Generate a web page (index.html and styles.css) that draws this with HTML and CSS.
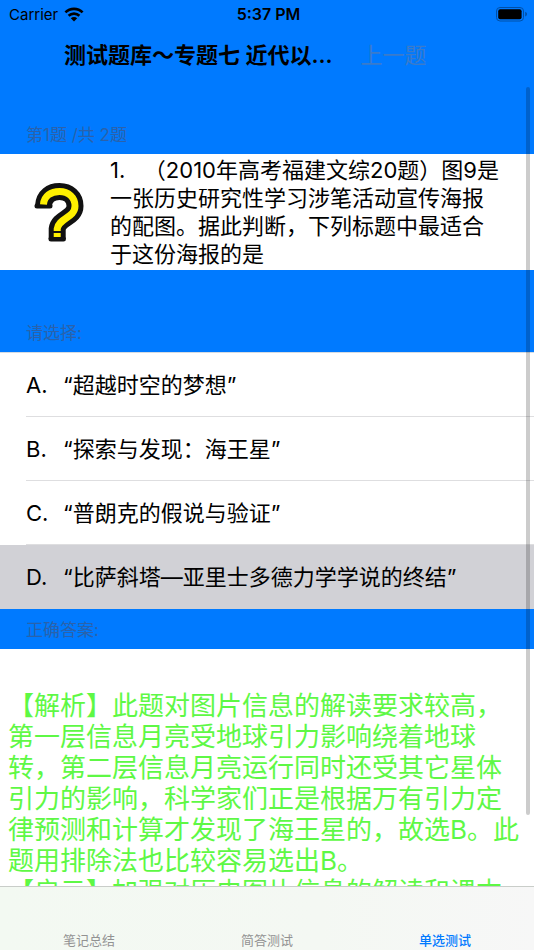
FILE: index.html
```html
<!DOCTYPE html>
<html lang="zh-CN">
<head>
  <meta charset="UTF-8" />
  <meta name="viewport" content="width=device-width, initial-scale=1" />
  <title>单选测试</title>
  <link rel="stylesheet" href="styles.css">
</head>
<body>
  <header class="top">
    <div class="status-bar">
      <div class="carrier">
        <span>Carrier</span>
        <svg class="wifi" viewBox="0 0 20 15" aria-hidden="true">
          <path d="M1.4 5.4 A12.2 12.2 0 0 1 18.6 5.4" />
          <path d="M4.6 8.8 A7.7 7.7 0 0 1 15.4 8.8" />
          <path class="wifi-dot" d="M10 14.4 L6.8 11.2 A4.6 4.6 0 0 1 13.2 11.2 Z" />
        </svg>
      </div>
      <div class="clock">5:37 PM</div>
      <svg class="battery" viewBox="0 0 32 15" aria-hidden="true">
        <rect class="battery-shell" x="0.5" y="0.5" width="27" height="13.5" rx="3.5" />
        <rect x="2.2" y="2.2" width="23.4" height="10" rx="2" />
        <path class="battery-tip" d="M29.2 4.8 C31.6 5.6 31.6 8.6 29.2 9.4 Z" />
      </svg>
    </div>
    <nav class="nav-bar">
      <h1 class="nav-title">测试题库～专题七 近代以...</h1>
      <button class="prev-btn" type="button" disabled>上一题</button>
    </nav>
  </header>

  <main class="content">
    <h2 class="section-head first">第1题 /共 2题</h2>
    <section class="question">
      <svg class="question-icon" viewBox="0 0 50 60" role="img" aria-label="问题">
        <path class="mark-outline" d="M8.5 24 C9 14 16 9.5 24.5 9.5 C33.5 9.5 40 15.5 40 24 C40 36 23.5 36 22.2 47 V57" />
        <path class="mark-outline-end" d="M2 24 H15 M16 57 H28.4" />
        <path class="mark-fill" d="M8.5 22.5 C9 14 16 9.5 24.5 9.5 C33.5 9.5 40 15.5 40 24 C40 36 23.5 36 22.2 47 V49" />
        <path class="mark-fill" d="M22.2 51 V55" />
      </svg>
      <p class="question-text">1.&nbsp;&nbsp;&nbsp;（2010年高考福建文综20题）图9是一张历史研究性学习涉笔活动宣传海报的配图。据此判断，下列标题中最适合于这份海报的是</p>
    </section>

    <h2 class="section-head" id="choose">请选择:</h2>
    <div class="options" role="radiogroup" aria-labelledby="choose">
      <label class="option">
        <input type="radio" name="answer" value="A">
        <span class="option-text"><span class="letter">A.</span>“超越时空的梦想”</span>
      </label>
      <label class="option">
        <input type="radio" name="answer" value="B">
        <span class="option-text"><span class="letter">B.</span>“探索与发现：海王星”</span>
      </label>
      <label class="option">
        <input type="radio" name="answer" value="C">
        <span class="option-text"><span class="letter">C.</span>“普朗克的假说与验证”</span>
      </label>
      <label class="option">
        <input type="radio" name="answer" value="D" checked>
        <span class="option-text"><span class="letter">D.</span>“比萨斜塔—亚里士多德力学学说的终结”</span>
      </label>
    </div>

    <h2 class="section-head short">正确答案:</h2>
    <section class="analysis">
      <p>【解析】此题对图片信息的解读要求较高，第一层信息月亮受地球引力影响绕着地球转，第二层信息月亮运行同时还受其它星体引力的影响，科学家们正是根据万有引力定律预测和计算才发现了海王星的，故选B。此题用排除法也比较容易选出B。</p>
      <p>【启示】加强对历史图片信息的解读和课本</p>
    </section>
  </main>

  <div class="scroll-thumb"></div>

  <nav class="tab-bar">
    <a class="tab" href="#notes">笔记总结</a>
    <a class="tab" href="#short">简答测试</a>
    <a class="tab active" href="#single">单选测试</a>
  </nav>
</body>
</html>
```

FILE: styles.css
```css
* {
  box-sizing: border-box;
}
body {
  margin: 0;
  height: 100vh;
  display: flex;
  flex-direction: column;
  position: relative;
  overflow: hidden;
  background: #fff;
  color: #000;
  font-family: Inter, 'Noto Sans CJK SC', sans-serif;
  font-size: 22px;
  text-spacing-trim: space-all;
}
h1, h2, p {
  margin: 0;
}

/* status bar + navigation */
.top {
  flex: none;
  background: #007aff;
}
.status-bar {
  display: grid;
  grid-template-columns: 1fr auto 1fr;
  align-items: center;
  height: 28px;
  padding: 0 6px 0 9px;
  font-size: 15px;
}
.carrier {
  display: flex;
  align-items: center;
  gap: 6px;
}
.wifi {
  width: 20px;
  height: 15px;
  fill: none;
  stroke: #000;
  stroke-width: 2.6;
}
.wifi .wifi-dot {
  fill: #000;
  stroke: none;
}
.clock {
  font-size: 16px;
  font-weight: 600;
}
.battery {
  justify-self: end;
  width: 32px;
  height: 15px;
}
.battery-shell {
  fill: none;
  stroke: #0050a8;
}
.battery-tip {
  fill: #0050a8;
}
.nav-bar {
  display: flex;
  align-items: center;
  gap: 28px;
  height: 54px;
  padding: 0 64px;
}
.nav-title {
  font-size: 22px;
  font-weight: 600;
  line-height: 32px;
  white-space: nowrap;
}
.prev-btn {
  padding: 0;
  border: none;
  background: none;
  font: inherit;
  line-height: 32px;
  white-space: nowrap;
  color: #3a7bcb;
}

/* table */
.content {
  flex: 1;
  min-height: 0;
  overflow: hidden;
}
.section-head {
  display: flex;
  align-items: flex-end;
  height: 82px;
  padding: 0 26px 7px;
  background: #007aff;
  color: #2a62ab;
  font-size: 17px;
  font-weight: 400;
  line-height: 24px;
}
.section-head.first {
  height: 72px;
}
.section-head.short {
  height: 40px;
}
.question {
  display: flex;
  align-items: center;
  gap: 25px;
  padding: 2px 32px 2px 35px;
}
.question-icon {
  flex: none;
  width: 50px;
  height: 60px;
  fill: none;
  overflow: visible;
}
.mark-outline {
  stroke: #111;
  stroke-width: 17;
}
.mark-outline-end {
  stroke: #111;
  stroke-width: 5;
  stroke-linecap: round;
}
.mark-fill {
  stroke: #fff000;
  stroke-width: 7;
}
.question-text {
  line-height: 28px;
}
.options {
  border-top: 1px solid #d5dbe2;
}
.option {
  display: block;
  padding-left: 26px;
  cursor: pointer;
}
.option input {
  position: absolute;
  opacity: 0;
}
.option-text {
  display: flex;
  align-items: baseline;
  height: 64px;
  border-bottom: 1px solid #dedee0;
  line-height: 64px;
}
.letter {
  width: 37px;
}
.option:has(input:checked) {
  background: #d1d1d6;
}
.option:last-child .option-text {
  border-bottom-color: transparent;
}
.analysis {
  padding: 41px 8px 0;
  color: #5ef845;
  font-size: 26px;
  line-height: 31px;
}
.scroll-thumb {
  position: absolute;
  top: 87px;
  right: 4px;
  bottom: 135px;
  width: 4px;
  border-radius: 2px;
  background: rgba(0, 0, 0, 0.2);
}

/* bottom tabs */
.tab-bar {
  flex: none;
  display: flex;
  height: 64px;
  border-top: 1px solid #c9cdc9;
  background: linear-gradient(90deg, #f3f9f2 0%, #f4f8f3 60%, #f7f7f7 100%);
}
.tab {
  flex: 1;
  display: flex;
  align-items: flex-end;
  justify-content: center;
  padding-bottom: 1px;
  font-size: 13px;
  line-height: 18px;
  color: #929292;
  text-decoration: none;
}
.tab.active {
  color: #007aff;
  font-weight: 500;
}
```
